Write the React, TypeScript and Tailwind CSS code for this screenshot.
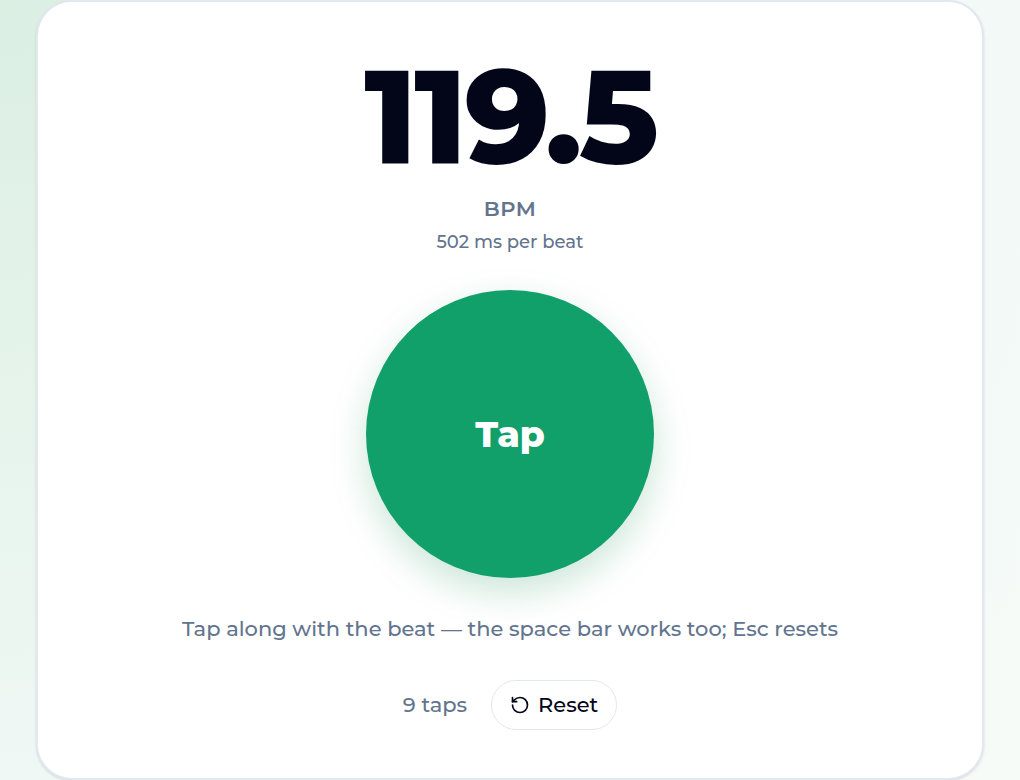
import { useCallback, useEffect, useState } from "react";
import { RotateCcw } from "lucide-react";

const BEAT_MS = 502;
const MAX_GAP_MS = 3000;

// One steady run of taps, so the counter has a tempo to start from
const initialTaps = Array.from({ length: 9 }, (_, i) => i * BEAT_MS);

export default function App() {
    const [taps, setTaps] = useState<number[]>(initialTaps);

    const handleTap = useCallback(() => {
        const now = performance.now();
        setTaps((prev) => {
            const last = prev[prev.length - 1];
            if (last === undefined || now < last || now - last > MAX_GAP_MS) return [now];
            return [...prev, now];
        });
    }, []);

    const handleReset = useCallback(() => setTaps([]), []);

    useEffect(() => {
        const onKeyDown = (e: KeyboardEvent) => {
            if (e.code === "Space") {
                e.preventDefault();
                if (!e.repeat) handleTap();
            } else if (e.key === "Escape") {
                handleReset();
            }
        };
        window.addEventListener("keydown", onKeyDown);
        return () => window.removeEventListener("keydown", onKeyDown);
    }, [handleTap, handleReset]);

    const interval = taps.length > 1 ? (taps[taps.length - 1] - taps[0]) / (taps.length - 1) : null;

    return (
        <div className="min-h-screen px-9 bg-[radial-gradient(circle_at_top_left,#dbefe3_0%,#e4f3ea_25%,#f0f8f5_62%,#f6fbf8_100%)] font-[Montserrat,Inter,sans-serif] font-medium text-slate-950">
            <main className="flex flex-col items-center rounded-[36px] border-2 border-slate-200 bg-white px-12 pt-[47px] pb-12 text-center shadow-sm">
                <output className="text-[132px] leading-[133px] font-extrabold tracking-tight">
                    {interval ? (60000 / interval).toFixed(1) : "–"}
                </output>
                <p className="mt-3 text-[21px] leading-[30px] font-semibold tracking-wide text-slate-500">BPM</p>
                <p className="mt-[6px] text-lg leading-6 text-slate-500">
                    {interval ? `${Math.round(interval)} ms per beat` : "Start tapping"}
                </p>

                <button
                    type="button"
                    onClick={handleTap}
                    className="mt-9 size-72 rounded-full bg-[#12a06a] text-4xl font-extrabold text-white shadow-[0_14px_36px_rgba(18,140,80,0.22)] transition-transform active:scale-95"
                >
                    Tap
                </button>

                <p className="mt-9 text-[21px] leading-[30px] text-slate-500">
                    Tap along with the beat — the space bar works too; Esc resets
                </p>

                <div className="mt-9 flex items-center gap-6 text-[21px] leading-[30px]">
                    <span className="text-slate-500">
                        {taps.length} {taps.length === 1 ? "tap" : "taps"}
                    </span>
                    <button
                        type="button"
                        onClick={handleReset}
                        className="flex items-center gap-2 rounded-full border border-slate-200 bg-white px-[18px] py-[9px] hover:bg-slate-50"
                    >
                        <RotateCcw size={20} aria-hidden="true" />
                        Reset
                    </button>
                </div>
            </main>
        </div>
    );
}
